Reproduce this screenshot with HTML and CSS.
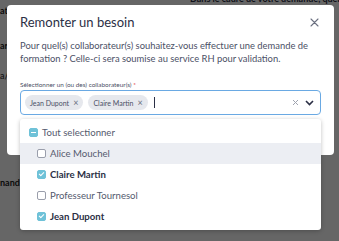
FILE: index.html
```html
<!DOCTYPE html>
<html lang="fr">

<head>
    <meta charset="UTF-8">
    <meta name="viewport" content="width=device-width, initial-scale=1.0">
    <title>Remonter un besoin</title>
    <link rel="stylesheet" href="styles.css">
</head>

<body>
    <!-- Page behind the modal -->
    <div class="page">
        <div class="page-top"><span>Dans le cadre de votre demande, quelque pratique spécifi</span></div>
        <p class="page-line l1">at</p>
        <p class="page-line l2">ar</p>
        <p class="page-line l3">a/2</p>
        <p class="page-line l4">nand</p>
    </div>

    <!-- Modal -->
    <div class="overlay">
        <div class="modal">
            <div class="modal-head">
                <h2>Remonter un besoin</h2>
                <button class="close" aria-label="Fermer">
                    <svg width="9" height="9" viewBox="0 0 9 9"><path d="M1 1 L8 8 M8 1 L1 8" stroke="#6b7080" stroke-width="1.1" stroke-linecap="round"/></svg>
                </button>
            </div>
            <p class="intro">Pour quel(s) collaborateur(s) souhaitez-vous effectuer une demande de formation ? Celle-ci sera soumise au service RH pour validation.</p>

            <label class="field-label">Sélectionner un (ou des) collaborateur(s) <span class="req">*</span></label>
            <div class="select">
                <div class="chips">
                    <span class="chip">Jean Dupont <span class="chip-x">×</span></span>
                    <span class="chip">Claire Martin <span class="chip-x">×</span></span>
                    <span class="caret"></span>
                </div>
                <div class="select-icons">
                    <svg width="7" height="7" viewBox="0 0 7 7"><path d="M1 1 L6 6 M6 1 L1 6" stroke="#a0a4b0" stroke-width="1"/></svg>
                    <svg width="9" height="6" viewBox="0 0 9 6"><path d="M1 1 L4.5 4.5 L8 1" fill="none" stroke="#2b2f45" stroke-width="1.6"/></svg>
                </div>

                <!-- Dropdown menu -->
                <ul class="menu">
                    <li class="opt all"><span class="box partial"></span>Tout selectionner</li>
                    <li class="opt hover"><span class="box"></span>Alice Mouchel</li>
                    <li class="opt checked"><span class="box on"></span>Claire Martin</li>
                    <li class="opt"><span class="box"></span>Professeur Tournesol</li>
                    <li class="opt checked"><span class="box on"></span>Jean Dupont</li>
                </ul>
            </div>
        </div>
    </div>
</body>

</html>
```

FILE: styles.css
```css
* {
    margin: 0;
    padding: 0;
    box-sizing: border-box;
}

body {
    font-family: 'Lato', sans-serif;
    width: 339px;
    height: 241px;
    overflow: hidden;
    position: relative;
    background: #fff;
    color: #2b2f45;
}

.page-top {
    height: 5px;
    overflow: hidden;
    white-space: nowrap;
    padding-left: 190px;
}

.page-top span {
    display: block;
    margin-top: -7px;
    font-size: 9px;
    line-height: 11px;
    font-weight: 700;
}

.page-line {
    font-size: 9px;
    font-weight: 700;
    color: #222;
    line-height: 11px;
}

.page-line.l1 { margin-top: 0; }
.page-line.l2 { margin-top: 24px; }
.page-line.l3 { margin-top: 19px; font-weight: 400; }
.page-line.l4 { margin-top: 96px; }

.overlay {
    position: absolute;
    inset: 0;
    background: rgba(0, 0, 0, 0.6);
    padding: 5px 5px 0 7px;
}

.modal {
    background: #fff;
    border-radius: 4px;
    height: 150px;
    padding: 9px 13px 0 13px;
}

.modal-head {
    display: flex;
    justify-content: space-between;
    align-items: center;
}

.modal-head h2 {
    font-size: 13px;
    font-weight: 400;
    color: #2b2f45;
    line-height: 17px;
}

.close {
    background: none;
    border: none;
    display: flex;
    margin-right: 2px;
}

.intro {
    margin-top: 8px;
    font-size: 9.4px;
    line-height: 13px;
    color: #4b5066;
}

.field-label {
    display: block;
    margin-top: 15px;
    font-size: 6.4px;
    color: #4b5066;
    line-height: 9px;
}

.req {
    color: #e0403a;
}

.select {
    position: relative;
    margin-top: 1px;
    height: 25px;
    border: 1px solid #6aa9e3;
    border-radius: 4px;
    display: flex;
    align-items: center;
    justify-content: space-between;
    padding: 0 6px 0 4px;
}

.chips {
    display: flex;
    align-items: center;
    gap: 5px;
}

.chip {
    background: #e6e8ed;
    border-radius: 8px;
    height: 15px;
    padding: 0 5px;
    font-size: 7px;
    color: #4b5066;
    display: flex;
    align-items: center;
    gap: 4px;
}

.chip-x {
    font-size: 9px;
    color: #6b7080;
}

.caret {
    width: 1px;
    height: 11px;
    background: #2b2f45;
    margin-left: 1px;
}

.select-icons {
    display: flex;
    align-items: center;
    gap: 6px;
}

.menu {
    list-style: none;
    position: absolute;
    top: 28px;
    left: -1px;
    right: -1px;
    background: #fff;
    border-radius: 3px;
    box-shadow: 0 1px 4px rgba(0, 0, 0, 0.25);
    padding: 3px 0;
}

.opt {
    height: 21px;
    display: flex;
    align-items: center;
    padding-left: 17px;
    font-size: 9.6px;
    color: #555a6e;
}

.opt.all {
    padding-left: 9px;
}

.opt.hover {
    background: #eceef3;
}

.opt.checked {
    font-weight: 700;
    color: #2b2f45;
}

.box {
    width: 9px;
    height: 9px;
    border: 1px solid #9a9eab;
    border-radius: 2px;
    margin-right: 4px;
    background: #fff;
    position: relative;
}

.box.on,
.box.partial {
    background: #6fc2d8;
    border-color: #6fc2d8;
}

.box.partial::after {
    content: "";
    position: absolute;
    left: 1px;
    right: 1px;
    top: 3px;
    height: 1px;
    background: #fff;
}

.box.on::after {
    content: "";
    position: absolute;
    left: 2px;
    top: 0px;
    width: 2px;
    height: 4px;
    border: solid #fff;
    border-width: 0 1px 1px 0;
    transform: rotate(45deg);
}
```
